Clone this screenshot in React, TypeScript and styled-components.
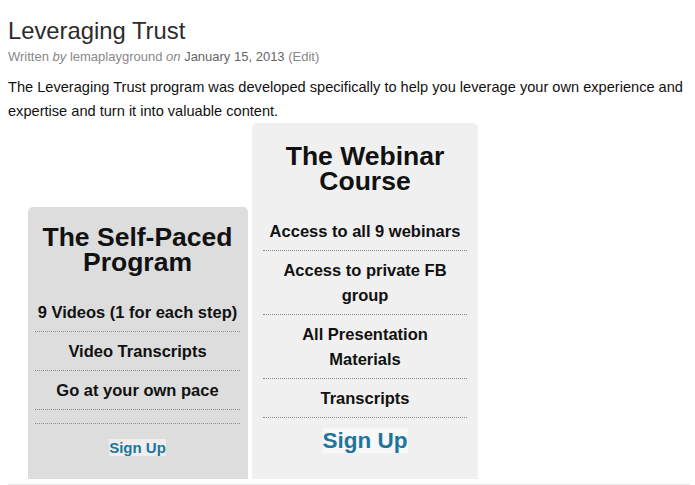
import styled, { createGlobalStyle } from "styled-components";

const GlobalStyle = createGlobalStyle`
  html, body {
    margin: 0;
    padding: 0;
    background: #fff;
  }
  body {
    font-family: "Liberation Sans", Arial, Helvetica, sans-serif;
    color: #111;
  }
`;

type Plan = {
  title: string;
  features: string[];
  featured?: boolean;
};

const plans: Plan[] = [
  {
    title: "The Self-Paced Program",
    features: ["9 Videos (1 for each step)", "Video Transcripts", "Go at your own pace", ""],
  },
  {
    title: "The Webinar Course",
    features: [
      "Access to all 9 webinars",
      "Access to private FB group",
      "All Presentation Materials",
      "Transcripts",
    ],
    featured: true,
  },
];

const App = () => {
  return (
    <>
      <GlobalStyle />
      <Article>
        <Title>Leveraging Trust</Title>
        <Meta>
          Written <em>by</em> lemaplayground <em>on</em> <MetaDate>January 15, 2013</MetaDate> (Edit)
        </Meta>
        <Intro>
          The Leveraging Trust program was developed specifically to help you leverage your own
          experience and expertise and turn it into valuable content.
        </Intro>

        <PlanRow>
          {plans.map((plan) => (
            <PlanCard key={plan.title} $featured={plan.featured}>
              <PlanTitle>
                {plan.title.split(" ").slice(0, -1).join(" ")}
                <br />
                {plan.title.split(" ").slice(-1)}
              </PlanTitle>
              {plan.features.map((f, i) => (
                <Feature key={i}>{f}</Feature>
              ))}
              <SignUpBox $featured={plan.featured}>
                <SignUpLink href="#" $featured={plan.featured}>
                  Sign Up
                </SignUpLink>
              </SignUpBox>
            </PlanCard>
          ))}
        </PlanRow>
        <Divider />
      </Article>
    </>
  );
};

export default App;

const Article = styled.article`
  width: 682px;
  padding: 16px 0 0 8px;
`;

const Title = styled.h1`
  margin: 0;
  font-size: 23.8px;
  line-height: 30px;
  font-weight: normal;
  color: #2b2b2b;
`;

const Meta = styled.div`
  margin-top: 1px;
  font-size: 13px;
  line-height: 20px;
  color: #888;
`;

const MetaDate = styled.span`
  color: #666;
`;

const Intro = styled.p`
  margin: 8px 0 0;
  font-size: 14.6px;
  line-height: 24px;
  color: #111;
`;

const PlanRow = styled.div`
  display: flex;
  align-items: flex-end;
  gap: 4px;
  margin-left: 20px;
`;

// the featured plan is a bit wider and sits taller than the other
const PlanCard = styled.div<{ $featured?: boolean }>`
  box-sizing: border-box;
  width: ${(p) => (p.$featured ? 226 : 220)}px;
  padding: ${(p) => (p.$featured ? "21px 11px 0" : "18px 8px 0 7px")};
  background: ${(p) => (p.$featured ? "#f0f0f0" : "#dddddd")};
  border-radius: 5px 5px 0 0;
  text-align: center;
`;

const PlanTitle = styled.h2`
  margin: 0 0 18px;
  font-size: 26.5px;
  line-height: 25px;
  font-weight: bold;
  color: #111;
`;

const Feature = styled.div`
  padding: 7px 2px 6px;
  font-size: 16.5px;
  line-height: 25px;
  font-weight: bold;
  color: #111;
  border-bottom: 1px dotted #8a8a8a;
`;

const SignUpBox = styled.div<{ $featured?: boolean }>`
  padding: ${(p) => (p.$featured ? "8px 0 21px" : "12px 0 19px")};
  line-height: ${(p) => (p.$featured ? 30 : 24)}px;
`;

const SignUpLink = styled.a<{ $featured?: boolean }>`
  font-size: ${(p) => (p.$featured ? 22.5 : 15)}px;
  font-weight: bold;
  color: #21759b;
  text-decoration: none;
  background: rgba(255, 255, 255, 0.5);
`;

const Divider = styled.div`
  margin-top: 5px;
  height: 2px;
  background: #e6e6e6;
`;
